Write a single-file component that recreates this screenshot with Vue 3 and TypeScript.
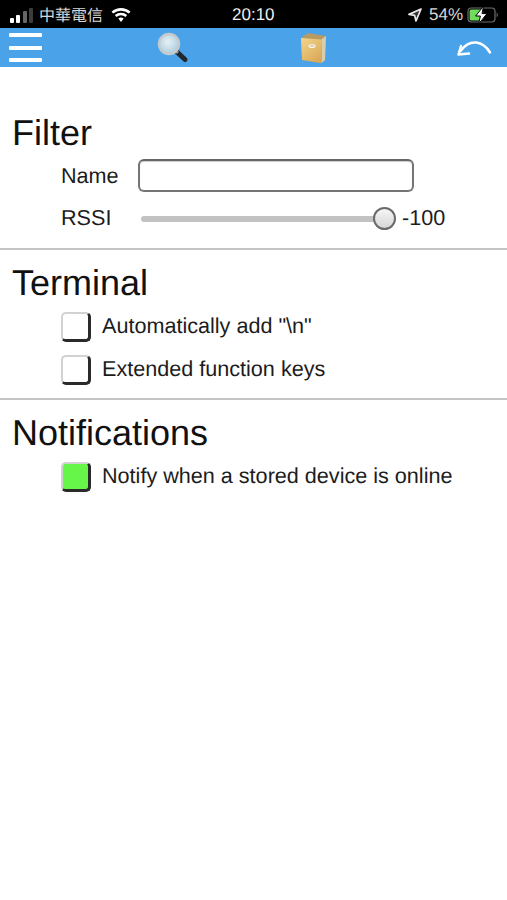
<template>
  <div class="page">
    <div class="status-bar">
      <div class="status-left">
        <span class="signal"><i class="on s1"></i><i class="on s2"></i><i class="s3"></i><i class="s4"></i></span>
        <span class="carrier">中華電信</span>
        <svg class="wifi" width="20" height="16" viewBox="0 0 20 16">
          <path d="M1.4 5.6 A13 13 0 0 1 18.6 5.6" fill="none" stroke="#fff" stroke-width="2.6" />
          <path d="M4.7 9 A8 8 0 0 1 15.3 9" fill="none" stroke="#fff" stroke-width="2.6" />
          <path d="M7.4 11.6 A4 4 0 0 1 12.6 11.6 L10 15 Z" fill="#fff" />
        </svg>
      </div>
      <span class="clock">20:10</span>
      <div class="status-right">
        <svg class="arrow" width="14" height="14" viewBox="0 0 14 14">
          <path d="M13 1 L1 6.4 L6.6 7.4 L8 13 Z" fill="#333" stroke="#e8e8e8" stroke-width="1.7" stroke-linejoin="round" />
        </svg>
        <span class="percent">54%</span>
        <svg class="battery" width="32" height="20" viewBox="0 0 32 20">
          <rect x="1" y="3" width="27" height="14" rx="3.4" fill="none" stroke="#6e6e6e" stroke-width="1.2" />
          <rect x="2.6" y="4.6" width="13.5" height="10.8" rx="1.6" fill="#6fdc5c" />
          <path d="M29.6 7.6 a3 3 0 0 1 0 4.8 Z" fill="#6e6e6e" />
          <path d="M16.6 1 L8.6 11 L13.4 11 L11.6 19 L20 8.6 L15 8.6 Z" fill="#fff" stroke="#000" stroke-width="1" />
        </svg>
      </div>
    </div>

    <div class="toolbar">
      <div class="menu"><i></i><i></i><i></i></div>
      <svg class="search" width="34" height="34" viewBox="0 0 34 34">
        <defs>
          <radialGradient id="lens" cx="45%" cy="40%" r="65%">
            <stop offset="0" stop-color="#e6f1f6" />
            <stop offset="1" stop-color="#a9c9da" />
          </radialGradient>
        </defs>
        <line x1="21" y1="21" x2="29" y2="28.5" stroke="#23262a" stroke-width="5" stroke-linecap="round" />
        <line x1="19" y1="19" x2="22" y2="22" stroke="#8a8f92" stroke-width="3" />
        <circle cx="13" cy="13" r="10" fill="url(#lens)" stroke="#c4cace" stroke-width="2.4" />
      </svg>
      <svg class="book" width="28" height="32" viewBox="0 0 28 32">
        <defs>
          <linearGradient id="cover" x1="0" y1="0" x2="0.7" y2="1">
            <stop offset="0" stop-color="#f3d58c" />
            <stop offset="1" stop-color="#d9a957" />
          </linearGradient>
        </defs>
        <path d="M1 6 L8 1 L26 4 L25 28 L21 31 L2 28 Z" fill="#b89a63" />
        <path d="M22 7 L26 4 L25 28 L21.5 31 Z" fill="#d9cdb0" />
        <path d="M1 6 L22 7.5 L21.5 31 L2 28 Z" fill="url(#cover)" />
        <ellipse cx="12" cy="14" rx="3.6" ry="2" fill="#f7f2e2" />
        <path d="M10 13.8 H14" stroke="#a89b80" stroke-width="0.7" />
      </svg>
      <svg class="back" width="36" height="20" viewBox="0 0 36 20">
        <path d="M34 13.5 C27 2 14 -1 4.5 12" fill="none" stroke="#fff" stroke-width="2.5" stroke-linecap="round" />
        <path d="M5 7 L2.5 15.5 L13 14.5" fill="none" stroke="#fff" stroke-width="2.5" stroke-linecap="round" stroke-linejoin="round" />
      </svg>
    </div>

    <section class="section first">
      <h2>Filter</h2>
      <div class="field name-row">
        <label>Name</label>
        <input class="text-input" type="text" />
      </div>
      <div class="field rssi-row">
        <label>RSSI</label>
        <div class="slider">
          <span class="knob"></span>
        </div>
        <span class="value">{{ rssi }}</span>
      </div>
    </section>

    <section class="section">
      <h2>Terminal</h2>
      <div v-for="item in terminalOptions" :key="item" class="check-row">
        <span class="box"></span>
        <span>{{ item }}</span>
      </div>
    </section>

    <section class="section last">
      <h2>Notifications</h2>
      <div class="check-row">
        <span class="box checked"></span>
        <span>Notify when a stored device is online</span>
      </div>
    </section>
  </div>
</template>

<script setup lang="ts">
const rssi = -100
const terminalOptions: string[] = ['Automatically add "\\n"', 'Extended function keys']
</script>

<style>
body {
  margin: 0;
  background: #fff;
}
</style>

<style scoped>
.page {
  width: 507px;
  height: 900px;
  overflow: hidden;
  font-family: "Liberation Sans", Arial, sans-serif;
  text-rendering: geometricPrecision;
  color: #1c1c1c;
  background: #fff;
}

.status-bar {
  height: 28px;
  background: #000;
  color: #e4e4e4;
  display: flex;
  align-items: center;
  justify-content: space-between;
  padding: 2px 8px 0 10px;
  box-sizing: border-box;
  position: relative;
}

.status-left,
.status-right {
  display: flex;
  align-items: center;
}

.signal {
  display: flex;
  align-items: flex-end;
  gap: 2.5px;
  height: 15px;
  width: 23px;
}

.signal i {
  width: 4px;
  background: #4a4a4a;
  border-radius: 1px;
}

.signal i.on {
  background: #fff;
}

.s1 { height: 5px; }
.s2 { height: 8px; }
.s3 { height: 12px; background: #666 !important; }
.s4 { height: 15px; background: #3c3c3c !important; }

.carrier {
  font-family: "Noto Sans CJK TC", sans-serif;
  font-size: 16px;
  line-height: 20px;
  margin-left: 6px;
  margin-top: -2px;
  color: #d8d8d8;
}

.wifi {
  margin-left: 8px;
  margin-top: -1px;
}

.clock {
  position: absolute;
  left: 232px;
  top: 5px;
  font-size: 17px;
  line-height: 20px;
  color: #eee;
}

.arrow {
  margin-right: 7px;
}

.percent {
  font-size: 17px;
  color: #d8d8d8;
  margin-right: 4px;
}

.toolbar {
  height: 39px;
  background: #4aa3e8;
  display: flex;
  align-items: center;
  position: relative;
}

.menu {
  width: 33px;
  margin-left: 9px;
  display: flex;
  flex-direction: column;
  gap: 8.5px;
}

.menu i {
  height: 4px;
  background: #fff;
  border-radius: 1px;
}

.search {
  margin-left: 114px;
  margin-top: 1px;
}

.book {
  margin-left: 110px;
  margin-top: 1px;
}

.back {
  margin-left: 128px;
  margin-top: 2px;
}

.section {
  border-bottom: 2px solid #c4c4c4;
  box-sizing: border-box;
  height: 150px;
  padding-left: 12px;
  padding-top: 12px;
}

.section.first {
  height: 183px;
  padding-top: 45px;
}

.section.last {
  border-bottom: none;
}

h2 {
  margin: 0;
  font-size: 36px;
  font-weight: 400;
  line-height: 42px;
  color: #111;
  height: 47px;
}

.section:not(.first) h2 {
  height: 42px;
}

.field {
  display: flex;
  align-items: center;
  padding-left: 49px;
  font-size: 21.6px;
}

.field label {
  width: 77px;
}

.text-input {
  width: 276px;
  height: 33px;
  box-sizing: border-box;
  border: 2px solid #757575;
  border-top-color: #666;
  border-radius: 6px;
  box-shadow: inset 0 1px 1px #ccc;
  background: #fff;
  outline: none;
  padding: 0;
}

.rssi-row {
  margin-top: 11px;
  height: 30px;
}

.slider {
  position: relative;
  width: 243px;
  height: 6px;
  margin-left: 3px;
  margin-top: 1px;
  background: #c2c2c2;
  border-radius: 3px;
}

.knob {
  position: absolute;
  left: 232px;
  top: -8.5px;
  width: 23px;
  height: 23px;
  box-sizing: border-box;
  border: 2px solid #6a6a6a;
  border-radius: 50%;
  background: linear-gradient(#f6f6f6, #d6d6d6);
}

.value {
  margin-left: 18px;
  font-size: 21.6px;
}

.check-row {
  display: flex;
  align-items: center;
  padding-left: 49px;
  height: 43px;
  font-size: 21.6px;
}

.box {
  width: 30px;
  height: 30px;
  box-sizing: border-box;
  border-radius: 5px;
  border: 2px solid #d2d2d2;
  border-right: 3px solid #2a2a2a;
  border-bottom: 3px solid #2a2a2a;
  background: #fff;
  margin-right: 11px;
  margin-top: 2px;
}

.box.checked {
  background: #66f64a;
}
</style>
